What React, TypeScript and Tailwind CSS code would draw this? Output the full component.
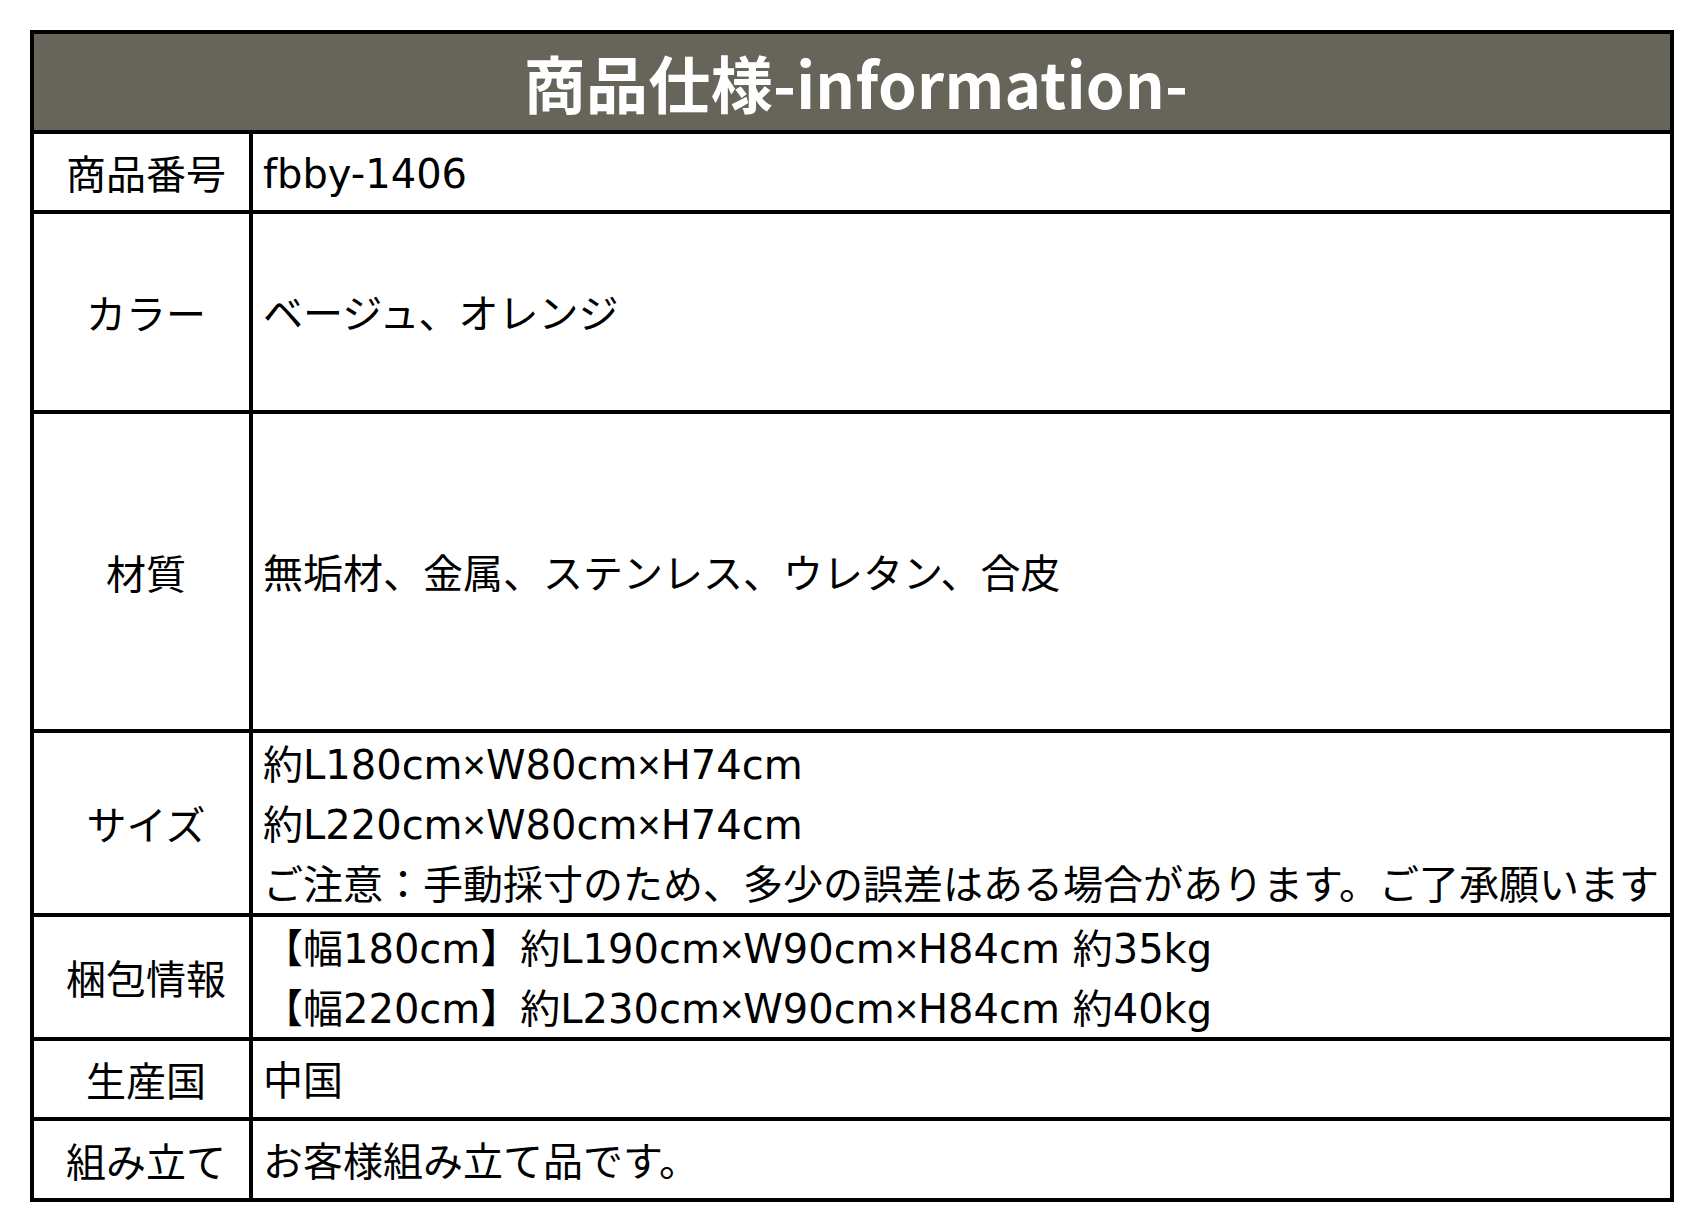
const CJK = "font-['Noto_Sans_CJK_JP',_'Noto_Sans',_sans-serif]";
const VALUE = "font-['DejaVu_Sans',_'Noto_Sans_CJK_JP',_sans-serif]";

type Row = { label: string; lines: string[]; h: string };

const rows: Row[] = [
  { label: "商品番号", lines: ["fbby-1406"], h: "h-[76px]" },
  { label: "カラー", lines: ["ベージュ、オレンジ"], h: "h-[196px]" },
  { label: "材質", lines: ["無垢材、金属、ステンレス、ウレタン、合皮"], h: "h-[315px]" },
  {
    label: "サイズ",
    lines: [
      "約L180cm×W80cm×H74cm",
      "約L220cm×W80cm×H74cm",
      "ご注意：手動採寸のため、多少の誤差はある場合があります。ご了承願います",
    ],
    h: "h-[180px]",
  },
  {
    label: "梱包情報",
    lines: ["【幅180cm】約L190cm×W90cm×H84cm 約35kg", "【幅220cm】約L230cm×W90cm×H84cm 約40kg"],
    h: "h-[120px]",
  },
  { label: "生産国", lines: ["中国"], h: "h-[76px]" },
  { label: "組み立て", lines: ["お客様組み立て品です。"], h: "h-[77px]" },
];

// the small multiplication sign comes from a narrower face
function Line({ text }: { text: string }) {
  const parts = text.split("×");
  return (
    <p>
      {parts.map((p, i) => (
        <span key={i}>
          {p}
          {i < parts.length - 1 && <span className="font-['Liberation_Sans',_sans-serif]">×</span>}
        </span>
      ))}
    </p>
  );
}

export default function App() {
  return (
    <div className={`min-h-screen bg-white pt-[30px] pl-[30px] text-black ${CJK}`}>
      <div className="w-[1644px] border-4 border-black">
        {/* Header */}
        <div className="h-[100px] bg-[#67645a] border-b-4 border-black flex items-center justify-center pl-[8px]">
          <h1 className="text-[62px] font-bold text-white leading-none tracking-[0.3px]">商品仕様-information-</h1>
        </div>

        {/* Rows */}
        {rows.map((row, i) => (
          <div
            key={row.label}
            className={`flex box-content ${row.h} ${i < rows.length - 1 ? "border-b-4 border-black" : ""}`}
          >
            <div className="w-[219px] shrink-0 border-r-4 border-black flex items-center justify-center pl-[9px] text-[40px] leading-none">
              {row.label}
            </div>
            <div className={`flex-1 flex flex-col justify-center pl-[10px] pt-[4px] text-[40px] leading-[60px] whitespace-nowrap ${VALUE}`}>
              {row.lines.map((line) => (
                <Line key={line} text={line} />
              ))}
            </div>
          </div>
        ))}
      </div>
    </div>
  );
}
